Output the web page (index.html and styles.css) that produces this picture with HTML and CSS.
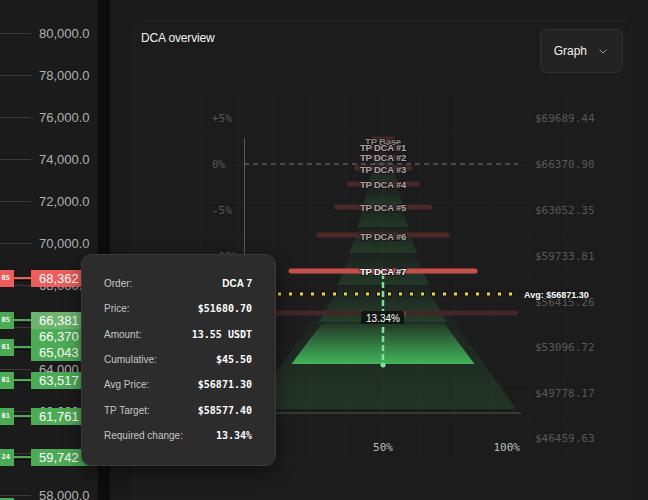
FILE: index.html
```html
<!DOCTYPE html>
<html lang="en">
<head>
<meta charset="utf-8">
<title>DCA overview</title>
<link rel="stylesheet" href="styles.css">
</head>
<body>
<div class="app">
  <aside class="ladder">
    <!-- price scale -->
    <div class="tick" style="top:25px"><span class="tick-line"></span><span class="tick-label">80,000.0</span></div>
    <div class="tick" style="top:67px"><span class="tick-line"></span><span class="tick-label">78,000.0</span></div>
    <div class="tick" style="top:109px"><span class="tick-line"></span><span class="tick-label">76,000.0</span></div>
    <div class="tick" style="top:151px"><span class="tick-line"></span><span class="tick-label">74,000.0</span></div>
    <div class="tick" style="top:193px"><span class="tick-line"></span><span class="tick-label">72,000.0</span></div>
    <div class="tick" style="top:235px"><span class="tick-line"></span><span class="tick-label">70,000.0</span></div>
    <div class="tick" style="top:277px"><span class="tick-line"></span><span class="tick-label">68,000.0</span></div>
    <div class="tick" style="top:319px"><span class="tick-line"></span><span class="tick-label">66,000.0</span></div>
    <div class="tick" style="top:361px"><span class="tick-line"></span><span class="tick-label">64,000.0</span></div>
    <div class="tick" style="top:403px"><span class="tick-line"></span><span class="tick-label">62,000.0</span></div>
    <div class="tick" style="top:445px"><span class="tick-line"></span><span class="tick-label">60,000.0</span></div>
    <div class="tick" style="top:487px"><span class="tick-line"></span><span class="tick-label">58,000.0</span></div>

    <!-- order quantity pins -->
    <div class="pin" style="top:270px"><span class="pin-qty sell">05</span><span class="pin-link sell"></span></div>
    <div class="pin" style="top:312px"><span class="pin-qty buy">05</span><span class="pin-link buy"></span></div>
    <div class="pin" style="top:339px"><span class="pin-qty buy">01</span><span class="pin-link buy"></span></div>
    <div class="pin" style="top:372px"><span class="pin-qty buy">01</span><span class="pin-link buy"></span></div>
    <div class="pin" style="top:408px"><span class="pin-qty buy">01</span><span class="pin-link buy"></span></div>
    <div class="pin" style="top:449px"><span class="pin-qty buy">24</span><span class="pin-link buy"></span></div>
    <div class="pin" style="top:498px"><span class="pin-qty buy">01</span><span class="pin-link buy"></span></div>

    <!-- order prices -->
    <div class="price sell" style="top:270px">68,362</div>
    <div class="price buy" style="top:328px">66,370</div>
    <div class="price buy" style="top:344px">65,043</div>
    <div class="price buy active" style="top:312px">66,381</div>
    <div class="price buy" style="top:372px">63,517</div>
    <div class="price buy" style="top:408px">61,761</div>
    <div class="price buy" style="top:449px">59,742</div>
  </aside>

  <div class="gutter"></div>

  <main class="main">
    <section class="card">
      <header class="card-head">
        <h2 class="card-title">DCA overview</h2>
        <button class="select" type="button">
          <span>Graph</span>
          <svg class="chev" width="8" height="5" viewBox="0 0 8 5"><path d="M0.5 0.5 L4 4 L7.5 0.5" fill="none" stroke="#9a9a9a" stroke-width="1"/></svg>
        </button>
      </header>

      <svg class="chart" viewBox="141 73 482 427" width="482" height="427">
        <defs>
          <linearGradient id="lvl" x1="0" y1="0" x2="0" y2="1">
            <stop offset="0" stop-color="#3daa58" stop-opacity="0.04"/>
            <stop offset="1" stop-color="#3daa58" stop-opacity="0.2"/>
          </linearGradient>
          <linearGradient id="lvl-next" x1="0" y1="0" x2="0" y2="1">
            <stop offset="0" stop-color="#3daa58" stop-opacity="0"/>
            <stop offset="1" stop-color="#3daa58" stop-opacity="0.17"/>
          </linearGradient>
          <linearGradient id="lvl-active" x1="0" y1="0" x2="0" y2="1">
            <stop offset="0" stop-color="#46c862" stop-opacity="0.1"/>
            <stop offset="1" stop-color="#46c862" stop-opacity="0.88"/>
          </linearGradient>
        </defs>

        <!-- background grid -->
        <path class="grid" d="M201 93V457M237.4 93V457M273.8 93V457M310.2 93V457M346.6 93V457M383 93V457M419.4 93V457M455.8 93V457M492.2 93V457M528.6 93V457M565 93V457M201 93H565M201 129.4H565M201 165.8H565M201 202.2H565M201 238.6H565M201 275H565M201 311.4H565M201 347.8H565M201 384.2H565M201 420.6H565M201 457H565"/>

        <!-- percent scale -->
        <text class="axis-y" x="212" y="118">+5%</text>
        <text class="axis-y" x="212" y="164">0%</text>
        <text class="axis-y" x="212" y="210">-5%</text>
        <text class="axis-y" x="212" y="256">-10%</text>

        <!-- price scale -->
        <text class="axis-y" x="535" y="118">$69689.44</text>
        <text class="axis-y" x="535" y="164">$66370.90</text>
        <text class="axis-y" x="535" y="210">$63052.35</text>
        <text class="axis-y" x="535" y="256">$59733.81</text>
        <text class="axis-y" x="535" y="302">$56415.26</text>
        <text class="axis-y" x="535" y="347">$53096.72</text>
        <text class="axis-y" x="535" y="393">$49778.17</text>
        <text class="axis-y" x="535" y="438">$46459.63</text>

        <line class="axis-v" x1="244.5" y1="138" x2="244.5" y2="413"/>
        <line class="axis-h" x1="244" y1="413" x2="521" y2="413"/>

        <!-- filled order levels -->
        <polygon fill="url(#lvl-next)" points="339,283 427,283 516,409 250,409"/>
        <polygon fill="url(#lvl)" points="380,150 386,150 393,165 373,165"/>
        <polygon fill="url(#lvl)" points="374,166 392,166 399,187 367,187"/>
        <polygon fill="url(#lvl)" points="368,188 398,188 403,206 363,206"/>
        <polygon fill="url(#lvl)" points="364,207 402,207 408.5,227 357.5,227"/>
        <polygon fill="url(#lvl)" points="359.5,228 406.5,228 417,253 349,253"/>
        <polygon fill="url(#lvl)" points="351,254 415,254 429,285 337,285"/>
        <polygon fill="url(#lvl)" points="340,286 426,286 447,322 319,322"/>
        <polygon fill="url(#lvl-active)" points="322,323 444,323 474.5,364 291.5,364"/>

        <line class="base-line" x1="244" y1="164" x2="518" y2="164"/>

        <!-- take-profit bars -->
        <rect class="tp-bar" x="371" y="136.5" width="24" height="5" rx="2.5"/>
        <rect class="tp-bar" x="366" y="144.5" width="34" height="5" rx="2.5"/>
        <rect class="tp-bar" x="360" y="154.5" width="46" height="5" rx="2.5"/>
        <rect class="tp-bar" x="354" y="165.5" width="58" height="5" rx="2.5"/>
        <rect class="tp-bar" x="346.5" y="181.5" width="73" height="5" rx="2.5"/>
        <rect class="tp-bar" x="334" y="204.5" width="98" height="5" rx="2.5"/>
        <rect class="tp-bar" x="316" y="232.5" width="134" height="5" rx="2.5"/>
        <rect class="tp-bar next" x="248" y="310.5" width="270" height="5" rx="2.5"/>
        <rect class="tp-bar current" x="288.5" y="268.5" width="189" height="5" rx="2.5"/>

        <!-- required change marker -->
        <line class="change" x1="383" y1="273" x2="383" y2="364"/>
        <circle cx="383" cy="365" r="2.5" fill="#7ae496"/>

        <text class="tp-label dim" x="383" y="141">TP Base</text>
        <text class="tp-label" x="383" y="147.5">TP DCA #1</text>
        <text class="tp-label" x="383" y="157.5">TP DCA #2</text>
        <text class="tp-label" x="383" y="169">TP DCA #3</text>
        <text class="tp-label" x="383" y="184">TP DCA #4</text>
        <text class="tp-label" x="383" y="207">TP DCA #5</text>
        <text class="tp-label" x="383" y="236">TP DCA #6</text>
        <text class="tp-label faint" x="383" y="313">TP DCA #8</text>
        <text class="tp-label current" x="383" y="271">TP DCA #7</text>

        <!-- average entry -->
        <line class="avg-edge" x1="244" y1="294" x2="513" y2="294"/>
        <line class="avg" x1="245" y1="294" x2="512" y2="294"/>
        <text class="avg-label" x="524" y="295">Avg: $56871.30</text>

        <rect class="change-box" x="361" y="311" width="43" height="13" rx="1"/>
        <text class="change-label" x="383" y="318">13.34%</text>

        <!-- fill scale -->
        <text class="axis-x" x="244" y="447">0%</text>
        <text class="axis-x mid" x="383" y="447">50%</text>
        <text class="axis-x end" x="520" y="447">100%</text>
      </svg>
    </section>
  </main>

  <div class="tooltip">
    <div class="tip-row"><span class="tip-key">Order:</span><span class="tip-val name">DCA 7</span></div>
    <div class="tip-row"><span class="tip-key">Price:</span><span class="tip-val">$51680.70</span></div>
    <div class="tip-row"><span class="tip-key">Amount:</span><span class="tip-val">13.55 USDT</span></div>
    <div class="tip-row"><span class="tip-key">Cumulative:</span><span class="tip-val">$45.50</span></div>
    <div class="tip-row"><span class="tip-key">Avg Price:</span><span class="tip-val">$56871.30</span></div>
    <div class="tip-row"><span class="tip-key">TP Target:</span><span class="tip-val">$58577.40</span></div>
    <div class="tip-row"><span class="tip-key">Required change:</span><span class="tip-val">13.34%</span></div>
  </div>
</div>
</body>
</html>
```

FILE: styles.css
```css
* {
  box-sizing: border-box;
}

html,
body {
  margin: 0;
  height: 100%;
}

body {
  background: #1a1a1a;
  color: #e8e8e8;
  font-family: "Liberation Sans", Arial, sans-serif;
  overflow: hidden;
}

.app {
  position: relative;
  display: flex;
  width: 648px;
  height: 500px;
  overflow: hidden;
}

/* ---------- price ladder ---------- */

.ladder {
  position: relative;
  flex: 0 0 98px;
  height: 500px;
  background: #1b1b1b;
  overflow: hidden;
}

.tick {
  position: absolute;
  left: 0;
  display: flex;
  align-items: center;
  gap: 8px;
  height: 16px;
}

.tick-line {
  width: 31px;
  height: 1px;
  background: #3a3a3a;
}

.tick-label {
  font-size: 13px;
  color: #b0b0b0;
  white-space: nowrap;
}

.pin {
  position: absolute;
  left: 0;
  display: flex;
  align-items: center;
  height: 17px;
}

.pin-qty {
  width: 14px;
  height: 17px;
  padding-right: 4px;
  overflow: hidden;
  text-align: right;
  font: 700 7px/17px "DejaVu Sans Mono", monospace;
  color: #fff;
}

.pin-link {
  width: 17px;
  height: 4px;
  border-bottom: 1px solid #0a0a0a;
}

.pin-qty.buy,
.price.buy {
  background: #4cab55;
}

.pin-qty.sell,
.price.sell {
  background: #ec5d5b;
}

.pin-link.buy {
  background: linear-gradient(#4cab55 0 2px, #2a2a2a 2px);
}

.pin-link.sell {
  background: linear-gradient(#ec5d5b 0 2px, #2a2a2a 2px);
}

.price {
  position: absolute;
  left: 31px;
  width: 63px;
  height: 17px;
  padding-left: 8px;
  font-size: 13px;
  line-height: 17px;
  color: #fff;
  white-space: nowrap;
}

.price.active {
  background: #6db46e;
}

.gutter {
  flex: 0 0 12px;
  background: #0d0d0d;
}

/* ---------- card ---------- */

.main {
  flex: 1;
  padding: 20px 16px 0 22px;
}

.card {
  height: 520px;
  padding: 8px;
  background: #1c1c1c;
  border: 1px solid #212121;
  border-radius: 8px;
}

.card-head {
  display: flex;
  justify-content: space-between;
  align-items: flex-start;
  height: 44px;
}

.card-title {
  margin: 0;
  font-size: 12px;
  font-weight: 400;
  line-height: 18px;
  letter-spacing: -0.15px;
  color: #f2f2f2;
}

.select {
  display: flex;
  align-items: center;
  gap: 12px;
  height: 44px;
  padding: 0 15px 0 13px;
  background: #232323;
  border: 1px solid #313131;
  border-radius: 7px;
  color: #efefef;
  font: 12px "Liberation Sans", Arial, sans-serif;
}

.chev {
  display: block;
}

/* ---------- chart ---------- */

.chart {
  display: block;
}

.chart text {
  font-family: "DejaVu Sans Mono", monospace;
  font-size: 11px;
  dominant-baseline: central;
}

.grid {
  fill: none;
  stroke: #222;
  stroke-width: 1;
}

.axis-y {
  fill: #585858;
}

.axis-x {
  fill: #bdbdbd;
}

.axis-x.mid {
  text-anchor: middle;
}

.axis-x.end {
  text-anchor: end;
}

.axis-v {
  stroke: #585858;
  stroke-width: 1;
}

.axis-h {
  stroke: #383838;
  stroke-width: 2;
}

.base-line {
  stroke: #777;
  stroke-width: 1;
  stroke-dasharray: 5 4;
}

.tp-bar {
  fill: #4b2929;
}

.tp-bar.next {
  fill: #432626;
}

.tp-bar.current {
  fill: #c5504b;
}

.chart .tp-label {
  font: 700 9.5px "Liberation Sans", Arial, sans-serif;
  letter-spacing: -0.2px;
  text-anchor: middle;
  fill: #aba3a3;
  stroke: rgba(22, 22, 22, 0.85);
  stroke-width: 2px;
  paint-order: stroke;
}

.chart .tp-label.dim {
  fill: #8c8484;
}

.chart .tp-label.faint {
  fill: #585454;
  stroke: none;
}

.chart .tp-label.current {
  fill: #fff;
}

.change {
  stroke: #7ae496;
  stroke-width: 2.5;
  stroke-dasharray: 6 3;
}

.avg-edge {
  stroke: #111;
  stroke-width: 5;
  stroke-dasharray: 5 6;
}

.avg {
  stroke: #f1d53a;
  stroke-width: 3;
  stroke-dasharray: 3 8;
}

.chart .avg-label {
  font: 700 9px "Liberation Sans", Arial, sans-serif;
  fill: #fff;
  stroke: rgba(20, 20, 20, 0.8);
  stroke-width: 2px;
  paint-order: stroke;
}

.change-box {
  fill: #0e1411;
  fill-opacity: 0.94;
}

.chart .change-label {
  font: 10px "Liberation Sans", Arial, sans-serif;
  text-anchor: middle;
  fill: #fff;
}

/* ---------- tooltip ---------- */

.tooltip {
  position: absolute;
  left: 81px;
  top: 254px;
  width: 195px;
  height: 212px;
  padding: 16px 23px 0 22px;
  background: #2c2c2c;
  border: 1px solid #3a3a3a;
  border-radius: 10px;
  box-shadow: 0 6px 18px rgba(0, 0, 0, 0.45);
}

.tip-row {
  display: flex;
  justify-content: space-between;
  align-items: center;
  height: 25.3px;
}

.tip-key {
  font-size: 10px;
  color: #c6c6c6;
}

.tip-val {
  font: 700 10px "DejaVu Sans Mono", monospace;
  color: #fff;
}

.tip-val.name {
  font-family: "Liberation Sans", Arial, sans-serif;
}
```
